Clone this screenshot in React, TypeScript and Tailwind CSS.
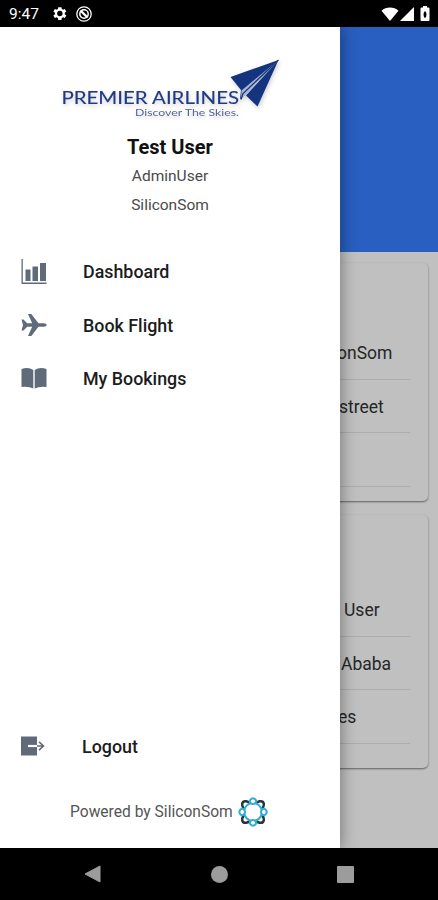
import type { ReactNode } from "react";

function StatusBar() {
    return (
        <header className="flex h-[27px] shrink-0 items-center bg-black pl-[9px] pr-[7px] text-white">
            <span className="w-[42px] pt-[2px] text-[15.500px] leading-none">9:47</span>
            <svg className="size-[17px]" viewBox="0 0 24 24" fill="currentColor">
                <path
                    fillRule="evenodd"
                    d="M19.4 13a7.500 7.500 0 0 0 0-2l2.200-1.700-2.100-3.600-2.600 1a8 8 0 0 0-1.700-1L14.800 3h-4.600l-.4 2.700a8 8 0 0 0-1.700 1l-2.600-1-2.100 3.600L5.600 11a7.500 7.500 0 0 0 0 2l-2.200 1.700 2.100 3.600 2.600-1a8 8 0 0 0 1.700 1l.4 2.700h4.600l.4-2.700a8 8 0 0 0 1.700-1l2.600 1 2.100-3.600zM12.500 15.800a3.800 3.800 0 1 1 0-7.600 3.800 3.800 0 0 1 0 7.600z"
                />
            </svg>
            <svg className="ml-[8px] size-[16px]" viewBox="0 0 16 16" fill="none" stroke="currentColor">
                <circle cx="8" cy="8" r="7.200" strokeWidth="1.300" />
                <circle cx="8" cy="8" r="4.200" strokeWidth="1.500" />
                <path d="M4.500 4.500 11.500 11.500" strokeWidth="2.400" />
            </svg>
            <div className="ml-auto flex items-center">
                <svg className="h-[14px] w-[18px]" viewBox="0 0 18 14" fill="currentColor">
                    <path d="M.5 3.700C5-.5 13-.5 17.500 3.700L9 14z" />
                </svg>
                <svg className="h-[14px] w-[15px]" viewBox="0 0 15 14" fill="currentColor">
                    <path d="M15 0v14H1z" />
                </svg>
                <svg className="mr-[1px] ml-[6px] h-[15px] w-[10px]" viewBox="0 0 10 15" fill="currentColor">
                    <path
                        fillRule="evenodd"
                        d="M3 0h4v1.500h1.500q1 0 1 1V14q0 1-1 1h-7q-1 0-1-1V2.500q0-1 1-1H3zM5 5Q3.500 6 3.500 8.500T5 12Q6.500 11 6.500 8.500T5 5z"
                    />
                </svg>
            </div>
        </header>
    );
}

function AirlineLogo() {
    return (
        <svg className="h-[70px] w-[240px]" viewBox="50 50 240 70">
            <g className="drop-shadow-[1px_2px_2px_rgba(0,0,0,0.2)]">
                <text
                    x="61.500"
                    y="104"
                    textLength="177.500"
                    lengthAdjust="spacingAndGlyphs"
                    fill="#1f3a85"
                    stroke="#1f3a85"
                    strokeWidth="0.150"
                    className="font-[Lato,sans-serif] text-[18px]"
                >
                    PREMIER AIRLINES
                </text>
                <text
                    x="135"
                    y="115.500"
                    textLength="104"
                    lengthAdjust="spacingAndGlyphs"
                    fill="#56659a"
                    className="font-[Lato,sans-serif] text-[9.300px]"
                >
                    Discover The Skies.
                </text>
                <path d="M278.500 60 230.500 77 241 90 240 99.500z" fill="#14347f" />
                <path d="M278.500 60 246 95.500 257.500 106.500z" fill="#14347f" />
                <path d="M278.500 60 241.500 90.500 241 99.500 246 94.500z" fill="#a9b4d3" />
                <path d="M278.500 60 243 93.500 241 99.500" fill="none" stroke="#14347f" strokeWidth="1.200" />
            </g>
        </svg>
    );
}

// Ring of interlocking loops used as the SiliconSom mark
function SiliconSomMark() {
    const angles = [0, 90, 180, 270];
    return (
        <svg className="ml-[5px] size-[30px]" viewBox="-15 -15 30 30" fill="none">
            {angles.map((a) => (
                <path
                    key={a}
                    transform={`rotate(${a})`}
                    d="M2.500-8.500C5-11 8.500-11.500 10-10S11-5 8.500-2.500"
                    stroke="#26343f"
                    strokeWidth="2.500"
                />
            ))}
            {angles.map((a) => (
                <g key={a} transform={`rotate(${a})`} stroke="#36aed2" strokeWidth="2.100">
                    <path d="M0-13.700C2-13.500 3.200-11.800 3.200-10.500S1.500-8 0-8-3.200-9.200-3.200-10.500-2-13.500 0-13.700z" />
                    <path d="M2-8.700Q7.300-7.300 8.700-2" />
                </g>
            ))}
        </svg>
    );
}

function ChartIcon() {
    return (
        <svg className="size-[26px]" viewBox="0 0 26 26" fill="#5f6b7b">
            <path d="M.5 0h1.300v23.500H25.500v1.500H.5zM4.500 10.500h5V22h-5zM11.500 7.500h5.500V22h-5.500zM19 4h6v18h-6z" />
        </svg>
    );
}

function PlaneIcon() {
    return (
        <svg className="size-[26px]" viewBox="0 0 26 26" fill="#5f6b7b">
            <path d="M.5 7.500h2l3.700 3.800 5-.1L7 2h3.300l7.200 9.200h5.200q3 .3 3 1.800t-3 1.800h-5.200L10.300 24H7l4.200-9.200-5-.1-3.700 3.800h-2L2 13z" />
        </svg>
    );
}

function BookIcon() {
    return (
        <svg className="size-[26px]" viewBox="0 0 26 26" fill="#5f6b7b">
            <path d="M.5 3Q7.500.8 12.300 4v18.500Q8 20.300.5 21zM25.500 3Q18.500.8 13.700 4v18.500q4.300-2.200 11.800-1.500z" />
        </svg>
    );
}

function LogoutIcon() {
    return (
        <svg className="size-[26px]" viewBox="0 0 26 26">
            <path d="M1 3.500h16v19H1z" fill="#5f6b7b" />
            <path d="M8 13h9.500" stroke="#fff" strokeWidth="2.200" />
            <path d="M17 13h6.500M19 8.800l4.500 4.200-4.500 4.200" fill="none" stroke="#5f6b7b" strokeWidth="1.600" />
        </svg>
    );
}

function MenuItem({ icon, label }: { icon: ReactNode; label: string }) {
    return (
        <a className="flex h-[53.500px] items-center gap-[36px] pl-[21px] text-[17.850px] font-medium text-[#1c1c1c]">
            {icon}
            <span className="pt-[2px]">{label}</span>
        </a>
    );
}

function Drawer() {
    return (
        <aside className="absolute inset-y-0 left-0 flex w-[340px] flex-col bg-white shadow-[2px_0_14px_rgba(0,0,0,0.35)]">
            <div className="flex flex-col items-center pt-[23px]">
                <AirlineLogo />
                <h1 className="mt-[14px] text-[20px] leading-[26px] font-bold text-[#111]">Test User</h1>
                <p className="mt-[2px] text-[15.500px] leading-[29px] text-[#4a4a4a]">AdminUser</p>
                <p className="text-[15.500px] leading-[29px] text-[#4a4a4a]">SiliconSom</p>
            </div>
            <nav className="mt-[25px]">
                <MenuItem icon={<ChartIcon />} label="Dashboard" />
                <MenuItem icon={<PlaneIcon />} label="Book Flight" />
                <MenuItem icon={<BookIcon />} label="My Bookings" />
            </nav>
            <div className="mt-auto -ml-px">
                <MenuItem icon={<LogoutIcon />} label="Logout" />
                <div className="mt-[24px] mb-[21px] flex items-center pl-[71px] text-[15.600px] text-[#555]">
                    <span className="pt-[2px]">Powered by SiliconSom</span>
                    <SiliconSomMark />
                </div>
            </div>
        </aside>
    );
}

function Card({ children }: { children: ReactNode }) {
    return (
        <section className="mr-[10px] rounded-[5px] bg-[#c0c0c0] pt-[63px] pr-[18px] pl-[337px] shadow-[0_1px_2px_rgba(0,0,0,0.5)]">
            {children}
        </section>
    );
}

function Row({ children }: { children?: ReactNode }) {
    return (
        <div className="flex h-[53.500px] items-center border-b border-[#adadad] pt-[2px] text-[17.500px] text-[#262626]">
            {children}
        </div>
    );
}

export default function App() {
    return (
        <div className="flex h-[900px] w-[438px] flex-col overflow-hidden bg-black font-[Roboto,sans-serif]">
            <StatusBar />
            <main className="relative h-[821px] shrink-0 overflow-hidden bg-[#c0c0c0]">
                <div className="h-[225px] bg-[#285fc0]" />
                <div className="mt-[11px] flex flex-col gap-[14px]">
                    <div className="h-[238px]">
                        <Card>
                            <Row><span>onSom</span></Row>
                            <Row><span className="pl-[2px]">street</span></Row>
                            <Row />
                            <div className="h-[14px]" />
                        </Card>
                    </div>
                    <Card>
                        <div className="h-[5px]" />
                        <Row><span className="pl-[7px]">User</span></Row>
                        <Row><span className="pl-[4px]">Ababa</span></Row>
                        <Row><span className="pl-[1px]">es</span></Row>
                        <div className="h-[24px]" />
                    </Card>
                </div>
                <Drawer />
            </main>
            <footer className="flex h-[52px] shrink-0 items-center justify-between bg-black pr-[84px] pl-[84px]">
                <svg className="h-[18px] w-[17px]" viewBox="0 0 17 18" fill="#9c9c9c">
                    <path d="M16 1v16L1 9z" stroke="#9c9c9c" strokeLinejoin="round" />
                </svg>
                <span className="size-[17px] rounded-full bg-[#9c9c9c]" />
                <span className="size-[17px] rounded-[1px] bg-[#9c9c9c]" />
            </footer>
        </div>
    );
}
